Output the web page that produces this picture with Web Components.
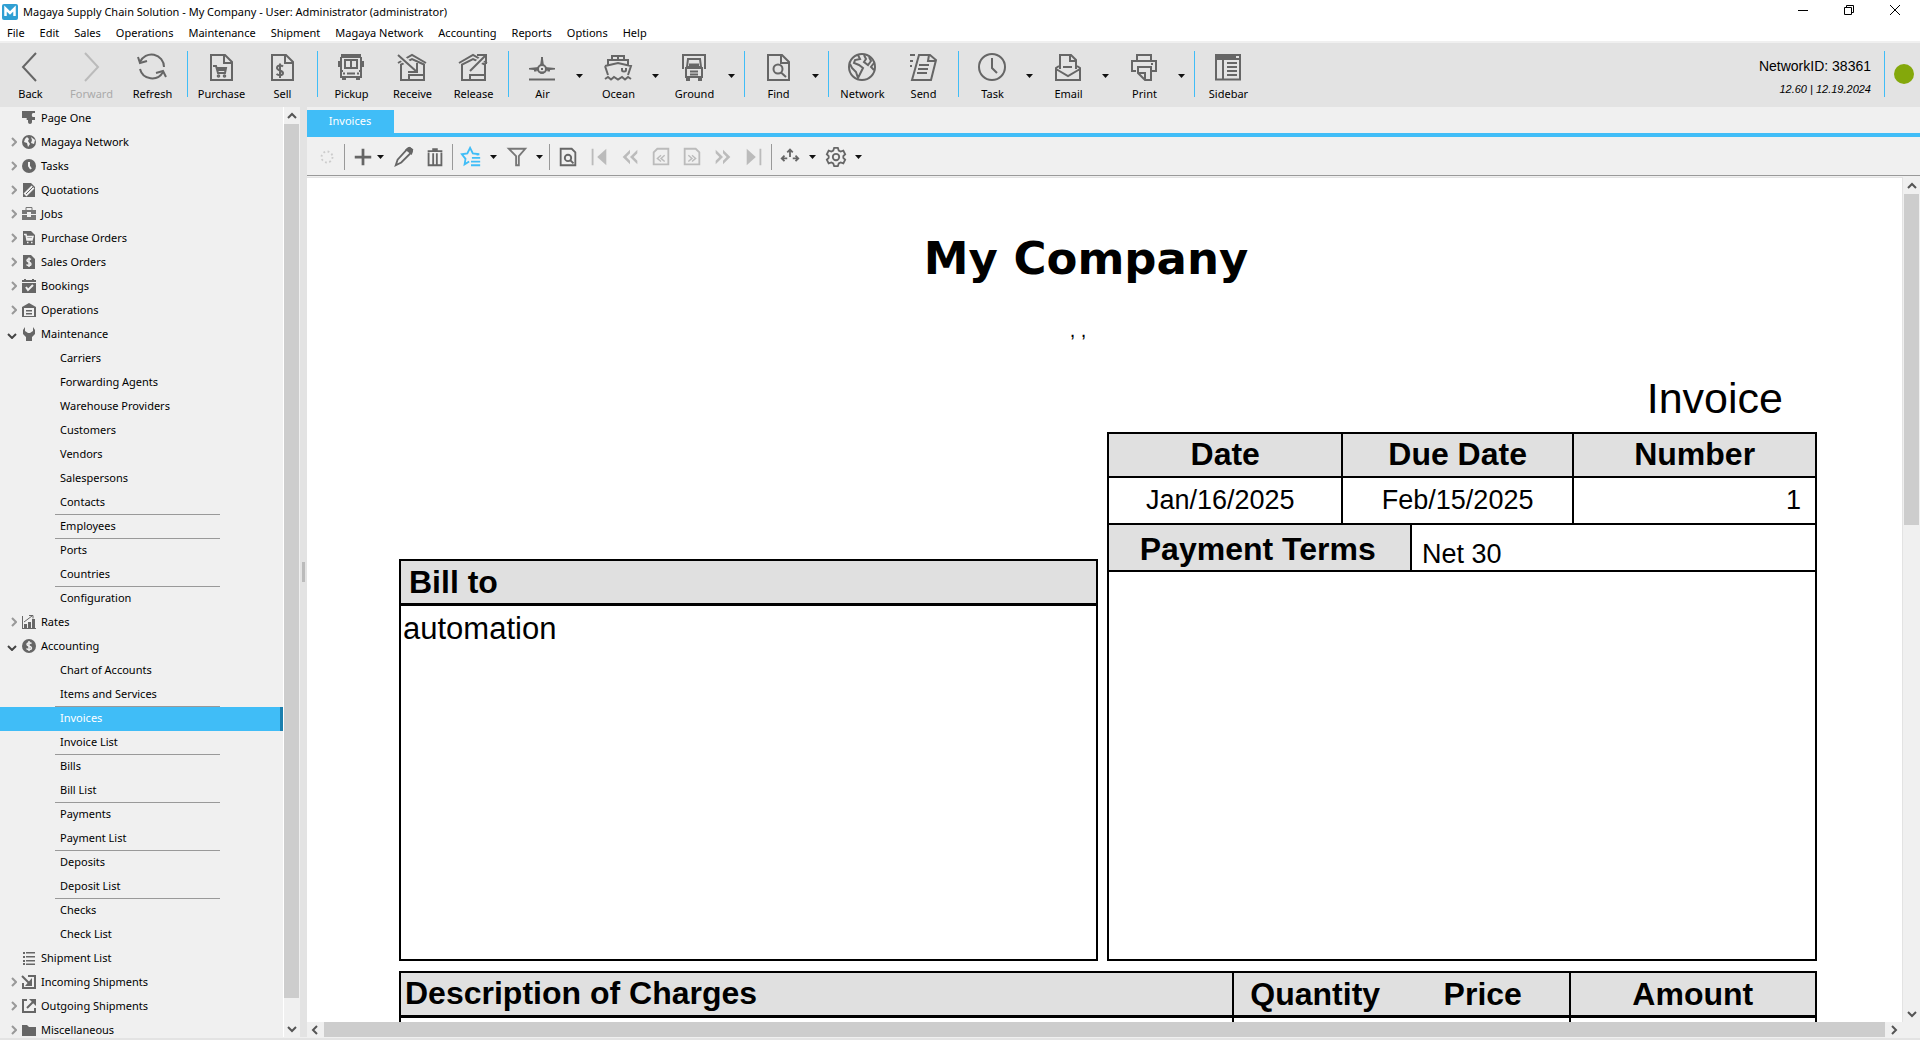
<!DOCTYPE html>
<html lang="en">
<head>
<meta charset="utf-8">
<title>Magaya Supply Chain Solution</title>
<style>
  html, body { margin: 0; height: 100%; }
  body {
    overflow: hidden;
    font: 11px/16px "Noto Sans", "Open Sans", sans-serif;
    color: #000;
    background: #f0f0f0;
    --blue: #40bdf7;
    --bar: #e3e3e3;
  }
</style>
</head>
<body>
<mg-app></mg-app>
<script>
const DOC = '<path d="M6 4H20L27 11V29H6Z"/><path d="M19 4V12H27"/>';
const HOUSE = '<path d="M2 12L16 4L30 12"/><path d="M5 29V13.500L16 8L28 13.500V29Z"/><path d="M13 29V24H27"/>';
/* Line icons on a 32 unit grid */
const LINE = {
  back: '<path d="M22 2L9 16L22 30"/>',
  forward: '<path d="M10 2L23 16L10 30"/>',
  refresh: '<path d="M4 11A12.500 12.500 0 0 1 28 16"/><path d="M2 6L4 12L11 10"/><path d="M4 18A12.500 12.500 0 0 0 27 21"/><path d="M20 22L27 20L30 26"/>',
  purchase: DOC + '<path d="M8 15H11L13 22H20L21 17H12M13 19H20"/><circle cx="13.500" cy="25" r=".8"/><circle cx="19.500" cy="25" r=".8"/>',
  sell: DOC + '<path d="M17 15.500C15 13.500 11 14.500 11 17S17 19.500 17 22S13 25 10.500 23M14 12.500V27"/>',
  pickup: '<path fill="#666" d="M7 4H25V6H7Z"/><path d="M6 6V26H26V6M10 9H22V17H10ZM16 8V17M5 20H8M24 20H27M8 26V28H10V26M22 26V28H24V26M12 22.500H20M8 22.500H10M22 22.500H24M4 10V16M28 10V16"/>',
  receive: HOUSE + '<path stroke="#e3e3e3" stroke-width="6" d="M2 3L19 19"/><path d="M2 4L21 21M21 12V21H12"/>',
  release: HOUSE + '<path stroke="#e3e3e3" stroke-width="6" d="M15 18L30 3"/><path d="M13 20L29 4M20 4H29V13"/>',
  air: '<path d="M3 28.500H29"/><circle cx="16" cy="18" r="4"/><path d="M16 6V14M14 21.500H18"/><path fill="#666" stroke="none" d="M13 16L3 17V18.500L8 19V20.500H10.500V19.500L13 20ZM19 16L29 17V18.500L24 19V20.500H21.500V19.500L19 20ZM15 17H17V19H15ZM15 8H17L18 15H14Z"/>',
  ocean: '<path d="M10 9V5H22V9M6 14V9H26V14M3 15L16 12L29 15L26 24M3 15L6 24M20 17V19C20 21 24 21 24 19V17M16 5V8"/><path d="M3 28L6 26L9 28.500L12 26L16 28.500L20 26L23 28.500L26 26L29 28"/>',
  ground: '<path d="M5 18V4H27V18"/><path d="M10 8H22L23 16H9ZM8 17H24V26H8Z"/><path stroke-width="3" d="M11 14H21"/><path d="M12 20.500H20M12 23.500H20M9 26V29H11V26M21 26V29H23V26"/>',
  find: DOC + '<circle cx="16" cy="18" r="4.500"/><path d="M19 21.500L24 26"/>',
  network: '<circle cx="16" cy="16" r="13"/><path d="M12 4L14 8L9 9L8 12L13 14L17 17L15 21L12 27L10 21L6 17L4 13M18 4L20 8L18 11L22 14L25 10L23 6M28 12L25 16L28 19"/>',
  send: '<path d="M12 4H23L29 9L24 29H5Z"/><path d="M22 4L21 10H29M12 14H22M11 18H21M10 22H20M3 4H8M3 10H6M3 15H5"/>',
  task: '<circle cx="16" cy="16" r="13"/><path d="M16 7V17L21 22"/>',
  email: '<path d="M8 18V4H19L24 9V18"/><path d="M18 4V10H24"/><path d="M7 15L4 17V29H28V17L25 15M4 18L16 25L28 18M11 16H20"/>',
  print: '<path d="M9 10V4H23V10M8 20H4V10H28V20H23M10 16H23V29H17L10 22ZM10 22H17V29M23 13H25"/>',
  sidebar: '<path d="M4 4H28V28.500H4Z"/><path stroke-width="4" d="M4 5.500H24"/><path d="M11 8V28M15 12H25M15 16H25M15 20H25M15 24H25M4 8H28"/>'
};
/* Glyphs on a 16 unit grid for the navigation tree */
const TREE = {
  page: '<path d="M1 1H14V3H12C10.500 3 10.500 7 12 7H14V10H11V12C11 14.500 7 14.500 7 12V10C4 10 7 8 5 8H1Z"/>',
  globe: '<path fill-rule="evenodd" d="M8 1A7 7 0 1 1 8 15A7 7 0 1 1 8 1M6 3L4 5L3 8L6 9L7 13L9 10L7 7L8 5ZM10 3L11 6L10 9L13 10L14 6Z"/>',
  clock: '<circle cx="8" cy="8" r="7"/><path fill="none" stroke="#f0f0f0" stroke-width="2" d="M8 4V8L10 11"/>',
  quote: '<path d="M2 1H10L14 5V15H2Z"/><path fill="none" stroke="#f0f0f0" stroke-width="4" d="M4 13L12 5"/><path fill="none" stroke="#666" d="M5 12L12 5"/>',
  job: '<path fill="none" stroke="#777" d="M5 5V1.500H11V5"/><path fill="#777" d="M1 4H15V8H1ZM1 9H15V14H1Z"/><path fill="#f0f0f0" d="M6 6H10V11H6Z"/>',
  cart: '<path d="M2 1H10L14 5V15H2Z"/><path fill="none" stroke="#f0f0f0" stroke-width="1.500" d="M3 4.500H5L6 10H11L12 6.500H5M6 8.500H11M6 12.500H7.500M10 12.500H11.500"/>',
  sale: '<path d="M2 1H10L14 5V15H2Z"/><path fill="none" stroke="#f0f0f0" stroke-width="1.500" d="M10 5.500C8 4 6 5 6 6.500S10 8 10 10S7 12 5.500 10.500M8 3.500V13"/>',
  book: '<path d="M1 2H3V1H5V2H11V1H13V2H15V4H1ZM1 5H15V15H1Z"/><path fill="none" stroke="#f0f0f0" stroke-width="2" d="M5 9L7 12L12 7"/>',
  ware: '<path d="M1 5L8 1L15 5V15H1Z"/><path fill="#f0f0f0" d="M3 6H13V14H3Z"/><path d="M5 8H11V9.500H5ZM5 11H11V12.500H5Z"/>',
  wrench: '<path d="M4 1V5L7 7H9L12 5V1L14 4V8L11 11V15H5V11L2 8V4Z"/>',
  rates: '<path d="M1 2H2V14H15V15H1ZM3 10H6V14H3ZM7 8H10V14H7ZM11 5H14V14H11Z"/><path fill="none" stroke="#666" d="M3 8L11 2M8 1.500H12V4.500"/>',
  coin: '<circle cx="8" cy="8" r="7"/><path fill="none" stroke="#f0f0f0" stroke-width="1.500" d="M10.500 5.500C8 4 6 5 6 6.500S10.500 8 10.500 10S7 12 5.500 10.500M8 3V13"/>',
  list: '<path d="M2 2H4V4H2ZM2 6H4V8H2ZM2 10H4V12H2ZM2 13H4V15H2ZM5 2H14V3.500H5ZM5 6H14V7.500H5ZM5 10H14V11.500H5ZM5 13.500H14V15H5Z"/>',
  inc: '<path fill="none" stroke="#666" stroke-width="2" d="M7 2H14V14H2V9M1 2L9 10"/><path d="M11 4V12H4Z"/>',
  out: '<path fill="none" stroke="#666" stroke-width="2" d="M6 2H2V14H14V10M6 10L13 3"/><path d="M8 1H15V8Z"/>',
  folder: '<path d="M1 3H6L8 5H15V14H1Z"/>'
};
/* View toolbar icons on a 24 unit grid */
const VIEW = {
  busy: '<circle cx="12" cy="12" r="6" stroke="#ccc" stroke-dasharray="2 2.700"/>',
  plus: '<path stroke-width="3" d="M12 3V21M3 12H21"/>',
  pencil: '<path d="M3 21L5 15L16 3C18 1 22 4 20 7L9 18Z"/><path fill="#666" d="M15 4L20 8L21 4L18 2Z"/>',
  trash: '<path d="M5 7V21H19V7M10 8V20M14 8V20"/><path d="M4 5.500H20M9 3.500H15"/>',
  star: '<path stroke="#40bdf7" d="M18 9.500L21 9L14 8L11 2L8 8L2 9L6 14L5 20L10 17"/><path stroke="#40bdf7" d="M13 13H22M12 17H22M12 21H22"/>',
  filter: '<path stroke="#777" d="M3 3H21L14 11V21H11V11Z"/>',
  preview: '<path d="M4 3H16L20 7V21H4Z"/><circle cx="12" cy="13" r="3.500"/><path d="M14 15L18 19"/>',
  first: '<path stroke="#bbb" d="M5 3V21"/><path fill="#bbb" stroke="none" d="M20 3V21L10 12Z"/>',
  prev: '<path fill="#bbb" stroke="none" d="M12 4L4 12L12 20V16L8 12L12 8ZM20 4L12 12L20 20V16L16 12L20 8Z"/>',
  pageprev: '<path stroke="#bbb" d="M8 3H20V20H4V7Z"/><path stroke="#bbb" stroke-width="1.500" d="M12 10L8 13.500L12 17M16 10L12 13.500L16 17"/>',
  pagenext: '<path stroke="#bbb" d="M4 3H16L20 7V20H4Z"/><path stroke="#bbb" stroke-width="1.500" d="M8 10L12 13.500L8 17M12 10L16 13.500L12 17"/>',
  next: '<path fill="#bbb" stroke="none" d="M4 4L12 12L4 20V16L8 12L4 8ZM12 4L20 12L12 20V16L16 12L12 8Z"/>',
  last: '<path stroke="#bbb" d="M19 3V21"/><path fill="#bbb" stroke="none" d="M4 3V21L14 12Z"/>',
  spread: '<path d="M12 4V12M9 7L12 4L15 7M9 13.500H3M6 10.500L3 13.500L6 16.500M15 13.500H21M18 10.500L21 13.500L18 16.500"/>',
  gear: '<circle cx="12" cy="12" r="3.500"/><path d="M10 2H14L15 5L17 6L20 5L22 9L20 11V13L22 15L20 19L17 18L15 19L14 22H10L9 19L7 18L4 19L2 15L4 13V11L2 9L4 5L7 6L9 5Z"/>'
};
const CARET = '<svg class="caret" width="7" height="4" viewBox="0 0 7 4" aria-hidden="true"><path d="M0 0H7L3.500 4Z" fill="#111"/></svg>';
const RESET = `
  *, *::before, *::after { box-sizing: border-box; }
  button { font: inherit; color: inherit; background: none; border: 0; padding: 0; margin: 0; display: flex; align-items: center; justify-content: center; }
  a { color: inherit; text-decoration: none; }
  svg { display: block; flex: none; }`;

class Base extends HTMLElement {
  connectedCallback() {
    if (this.shadowRoot) return;
    this.attachShadow({ mode: 'open' }).innerHTML = `<style>${RESET}${this.css()}</style>${this.html()}`;
  }
  css() { return ''; }
  html() { return '<slot></slot>'; }
}

customElements.define('mg-title-bar', class extends Base {
  css() { return `
    :host { display: flex; height: 23px; background: #fff; align-items: center; padding: 0 2px; gap: 5px; }
    span { flex: 1; white-space: nowrap; }
    .win { display: flex; align-self: flex-start; }
    .win button { width: 46px; height: 20px; }`; }
  html() { return `
    <svg width="16" height="16" viewBox="0 0 16 16" aria-hidden="true"><rect width="16" height="16" rx="2" fill="#2f9fd3"/><path d="M3.500 12V4.500L8 9L12.500 4.500V12" fill="none" stroke="#fff" stroke-width="2.500"/></svg>
    <span><slot></slot></span>
    <div class="win">
      <button aria-label="Minimize"><svg width="10" height="10"><path d="M0 5.500H10" stroke="#000"/></svg></button>
      <button aria-label="Restore"><svg width="10" height="10" fill="none" stroke="#000"><path d="M.5 2.500H7.500V9.500H.5ZM2.500 2.500V.5H9.500V7.500H7.500"/></svg></button>
      <button aria-label="Close"><svg width="10" height="10" stroke="#000"><path d="M0 0L10 10M10 0L0 10"/></svg></button>
    </div>`; }
});

customElements.define('mg-menu-bar', class extends Base {
  css() { return `
    :host { display: block; background: #fff; height: 18px; }
    nav { display: flex; gap: 15px; padding-left: 7px; line-height: 20px; }`; }
  html() { return `<nav>${this.getAttribute('items').split(',').map(t => `<button>${t}</button>`).join('')}</nav>`; }
});

customElements.define('mg-tool', class extends Base {
  css() { return `
    :host { display: flex; color: #000; }
    :host([off]) { color: #aaa; }
    .main { width: 61px; flex-direction: column; }
    .main svg { fill: none; stroke: #666; stroke-width: 2; margin-right: 1px; }
    :host([off]) .main svg { stroke: #bbb; }
    .label { line-height: 16px; margin-top: 3px; }
    .drop { width: 15px; padding-right: 3px; }`; }
  html() { return `
    <button class="main"><svg width="32" height="32" viewBox="0 0 32 32" aria-hidden="true">${LINE[this.getAttribute('icon')]}</svg><span class="label"><slot></slot></span></button>
    ${this.hasAttribute('drop') ? `<button class="drop" aria-label="More">${CARET}</button>` : ''}`; }
});

customElements.define('mg-main-toolbar', class extends Base {
  css() { return `
    :host { display: flex; height: 66px; border-top: 2px solid #f0f0f0; background: var(--bar); padding-top: 8px; }
    i { width: 1px; height: 46px; margin: 0 3px 0 4px; background: var(--blue); }
    .group { display: flex; height: 50px; }
    .info { margin-left: auto; text-align: right; font-family: "Liberation Sans", Arial, sans-serif; padding: 6px 9px 0 0; font-size: 14px; line-height: 18px; }
    em { display: block; font-size: 11px; line-height: 16px; margin-top: 6px; }
    .dot { width: 20px; height: 20px; border-radius: 50%; background: #84a80b; margin: 13px 6px 0 6px; }`; }
  html() {
    const groups = [
      [['back', 'Back'], ['forward', 'Forward', 'off'], ['refresh', 'Refresh']],
      [['purchase', 'Purchase'], ['sell', 'Sell']],
      [['pickup', 'Pickup'], ['receive', 'Receive'], ['release', 'Release']],
      [['air', 'Air', 'drop'], ['ocean', 'Ocean', 'drop'], ['ground', 'Ground', 'drop']],
      [['find', 'Find', 'drop']],
      [['network', 'Network'], ['send', 'Send']],
      [['task', 'Task', 'drop'], ['email', 'Email', 'drop'], ['print', 'Print', 'drop']],
      [['sidebar', 'Sidebar']]];
    return groups.map(g => `<div class="group">${g.map(([i, t, f]) => `<mg-tool icon="${i}" ${f || ''}>${t}</mg-tool>`).join('')}</div>`).join('<i></i>') +
      '<div class="info">NetworkID: 38361<em>12.60 | 12.19.2024</em></div><i></i><div class="dot"></div>';
  }
});

customElements.define('mg-scroll-bar', class extends Base {
  css() { return `
    :host { display: flex; flex-direction: column; width: 15px; background: #f0f0f0; }
    :host([across]) { flex-direction: row; width: auto; height: 15px; }
    button { width: 15px; height: 17px; flex: none; }
    :host([across]) button { width: 17px; height: 15px; }
    .track { flex: 1; display: flex; flex-direction: inherit; }
    .thumb { background: #cdcdcd; flex: 0 0 var(--size, 100%); }
    svg { fill: none; stroke: #555; stroke-width: 2; }`; }
  html() {
    const [a, b] = this.hasAttribute('across')
      ? ['M6 1L2 5L6 9', 'M3 1L7 5L3 9'] : ['M1 7L5 3L9 7', 'M1 3L5 7L9 3'];
    const btn = (d, n) => `<button aria-label="${n}"><svg width="10" height="10" viewBox="0 0 10 10"><path d="${d}"/></svg></button>`;
    return `${btn(a, 'Scroll back')}<div class="track"><div class="thumb"></div></div>${btn(b, 'Scroll forward')}`;
  }
});

customElements.define('mg-tree-item', class extends Base {
  css() { return `
    :host { display: block; height: 24px; line-height: 22px; }
    a { display: flex; align-items: center; height: 24px; padding: 0 0 2px 7px; }
    .chev { width: 14px; display: flex; justify-content: center; }
    .chev svg { fill: none; stroke: #999; stroke-width: 2; }
    .chev.closed { justify-content: flex-end; padding-right: 4px; }
    .chev.open svg { stroke: #444; margin-right: 4px; margin-top: 4px; }
    .icon { fill: #666; margin-right: 4px; }
    :host([child]) { position: relative; }
    :host([child]) a { padding-left: 60px; }
    :host([rule])::after { content: ""; position: absolute; left: 55px; width: 165px; bottom: 0; height: 1px; background: #999; }
    :host([current]) a { background: var(--blue); color: #fff; border-right: 3px solid #1b7fae; }`; }
  html() {
    if (this.hasAttribute('child')) return '<a href="#"><slot></slot></a>';
    const s = this.getAttribute('state');
    const chev = s === 'closed' ? '<svg width="6" height="10"><path d="M1 1L5 5L1 9"/></svg>'
      : s === 'open' ? '<svg width="10" height="6"><path d="M1 1L5 5L9 1"/></svg>' : '';
    return `<a href="#"><span class="chev ${s || ''}">${chev}</span><svg class="icon" width="16" height="16" viewBox="0 0 16 16" aria-hidden="true">${TREE[this.getAttribute('icon')]}</svg><slot></slot></a>`;
  }
});

customElements.define('mg-tree', class extends Base {
  css() { return `
    :host { display: flex; overflow: hidden; background: #f0f0f0; }
    nav { flex: 1; overflow: hidden; border-right: 1px solid #fff; }
    mg-scroll-bar { --size: 97.5%; margin-right: 1px; }`; }
  html() {
    const rows = [
      ['Page One', 'page'], ['Magaya Network', 'globe', 'closed'], ['Tasks', 'clock', 'closed'], ['Quotations', 'quote', 'closed'],
      ['Jobs', 'job', 'closed'], ['Purchase Orders', 'cart', 'closed'], ['Sales Orders', 'sale', 'closed'], ['Bookings', 'book', 'closed'],
      ['Operations', 'ware', 'closed'], ['Maintenance', 'wrench', 'open'],
      'Carriers', 'Forwarding Agents', 'Warehouse Providers', 'Customers', 'Vendors', 'Salespersons', 'Contacts_', 'Employees_',
      'Ports', 'Countries_', 'Configuration', ['Rates', 'rates', 'closed'], ['Accounting', 'coin', 'open'],
      'Chart of Accounts', 'Items and Services_', 'Invoices*', 'Invoice List_', 'Bills', 'Bill List_', 'Payments', 'Payment List_',
      'Deposits', 'Deposit List_', 'Checks', 'Check List', ['Shipment List', 'list'], ['Incoming Shipments', 'inc', 'closed'],
      ['Outgoing Shipments', 'out', 'closed'], ['Miscellaneous', 'folder', 'closed']];
    return `<nav aria-label="Modules">${rows.map(r => Array.isArray(r)
      ? `<mg-tree-item icon="${r[1]}" ${r[2] ? `state="${r[2]}"` : ''}>${r[0]}</mg-tree-item>`
      : `<mg-tree-item child ${r.endsWith('_') ? 'rule' : ''} ${r.endsWith('*') ? 'current' : ''}>${r.replace(/[_*]/, '')}</mg-tree-item>`).join('')}</nav><mg-scroll-bar></mg-scroll-bar>`;
  }
});

customElements.define('mg-view-bar', class extends Base {
  css() { return `
    :host { display: flex; align-items: center; height: 39px; padding: 2px 0 0 4px; border-bottom: 1px solid #999; }
    button { width: 31px; height: 30px; }
    .drop { width: 12px; margin: 0 2px 0 1px; }
    .tight { margin-left: -4px; }
    svg { fill: none; stroke: #666; stroke-width: 2; }
    .caret { stroke: none; }
    i { width: 1px; height: 26px; background: #999; margin: 0 2px; }`; }
  html() {
    const b = n => `<button aria-label="${n}"><svg width="22" height="22" viewBox="0 0 24 24">${VIEW[n]}</svg></button>`;
    const d = `<button class="drop" aria-label="More">${CARET}</button>`;
    return b('busy') + '<i></i>' + b('plus') + d.replace('drop', 'drop tight') + b('pencil') + b('trash') + '<i></i>' + b('star') + d + b('filter') + d +
      '<i></i>' + ['preview', 'first', 'prev', 'pageprev', 'pagenext', 'next', 'last'].map(b).join('') + '<i></i>' + b('spread') + d + b('gear') + d;
  }
});

customElements.define('mg-invoice', class extends Base {
  css() { return `
    :host { display: block; background: #fff; overflow: hidden; font-family: "Liberation Sans", Arial, sans-serif; font-size: 27px; line-height: 32px; padding: 48px 85px 0 92px; }
    header { text-align: center; padding-right: 44px; }
    h1 { margin: 0; font: 700 45px/66px "DejaVu Sans", sans-serif; }
    header p { margin: 26px 0 0; padding-right: 16px; font-size: 20px; line-height: 24px; }
    h2 { margin: 24px 34px 0 0; text-align: right; font-size: 43px; font-weight: 400; line-height: 64px; height: 62px; }
    .cols { display: grid; grid-template-columns: 699fr 709fr; column-gap: 9px; margin-top: 4px; }
    table { border-collapse: collapse; width: 100%; table-layout: fixed; }
    th, td { border: 2px solid #000; padding: 0; }
    th { background: #e0e0e0; font-size: 32px; line-height: 40px; height: 44px; vertical-align: top; }
    td { text-align: center; height: 47px; padding-bottom: 2px; }
    td:first-child { padding-right: 10px; }
    td.num { text-align: right; padding-right: 14px; }
    .terms { display: grid; grid-template-columns: 304fr 405fr; margin: 0; border: solid #000; border-width: 0 2px 2px; height: 47px; }
    dt { background: #e0e0e0; border-right: 2px solid #000; font-weight: 700; font-size: 32px; text-align: center; line-height: 48px; height: 45px; padding-right: 4px; }
    dd { margin: 0; padding: 13px 0 0 10px; }
    .blank { border: solid #000; border-width: 0 2px 2px; height: 389px; }
    .bill { margin-top: 127px; display: flex; flex-direction: column; }
    h3 { margin: 0; background: #e0e0e0; border: 2px solid #000; border-bottom-width: 3px; font-size: 32px; line-height: 42px; padding-left: 8px; }
    .bill div { flex: 1; border: 2px solid #000; border-top: 0; font-size: 31px; line-height: 46px; padding-left: 2px; }
    .charges { margin-top: 10px; }
    .charges th { border-bottom-width: 3px; text-align: center; line-height: 42px; }
    .charges th.l { text-align: left; padding-left: 4px; line-height: 40px; }
    .charges th.q { border-right: 0; } .charges th.p { border-left: 0; }
    .charges td { height: 40px; }`; }
  html() { return `
    <header><h1>My Company</h1><p>, ,</p></header>
    <h2>Invoice</h2>
    <div class="cols">
      <section class="bill"><h3>Bill to</h3><div>automation</div></section>
      <section>
        <table><colgroup><col style="width:33%"><col style="width:32.700%"><col></colgroup>
          <thead><tr><th>Date</th><th>Due Date</th><th>Number</th></tr></thead>
          <tbody><tr><td>Jan/16/2025</td><td>Feb/15/2025</td><td class="num">1</td></tr></tbody></table>
        <dl class="terms"><dt>Payment Terms</dt><dd>Net 30</dd></dl>
        <div class="blank"></div>
      </section>
    </div>
    <table class="charges"><colgroup><col style="width:58.800%"><col style="width:11.600%"><col style="width:12.200%"><col></colgroup>
      <thead><tr><th class="l">Description of Charges</th><th class="q">Quantity</th><th class="p">Price</th><th>Amount</th></tr></thead>
      <tbody><tr><td></td><td colspan="2"></td><td></td></tr></tbody></table>`; }
});

customElements.define('mg-workspace', class extends Base {
  css() { return `
    :host { display: flex; flex-direction: column; min-width: 0; min-height: 0; }
    .tabs { display: flex; padding-top: 3px; border-bottom: 4px solid var(--blue); }
    .tabs button { width: 87px; height: 23px; background: var(--blue); color: #fff; padding: 0 1px 2px 0; }
    .view { flex: 1; min-height: 0; display: grid; grid-template-columns: minmax(0, 1fr) 17px; margin-top: 1px; }
    mg-invoice { border: 1px solid #e3e3e3; border-left: 0; border-bottom: 0; min-height: 0; }
    .view mg-scroll-bar { --size: 40.800%; margin: 0 1px; }
    .foot { margin-right: 18px; }`; }
  html() { return `
    <div class="tabs" role="tablist"><button role="tab" aria-selected="true">Invoices</button></div>
    <mg-view-bar></mg-view-bar>
    <div class="view"><mg-invoice></mg-invoice><mg-scroll-bar></mg-scroll-bar></div>
    <mg-scroll-bar class="foot" across></mg-scroll-bar>`; }
});

customElements.define('mg-app', class extends Base {
  css() { return `
    :host { display: flex; flex-direction: column; height: 100vh; background: #f0f0f0; }
    main { flex: 1; min-height: 0; display: grid; grid-template-columns: 300px 7px minmax(0, 1fr); grid-template-rows: minmax(0, 1fr); border-bottom: 2px solid var(--bar); padding-bottom: 1px; }
    .split { background: var(--bar); display: flex; align-items: center; justify-content: center; }
    .split::before { content: ""; width: 3px; height: 20px; background: #bbb; }`; }
  html() { return `
    <mg-title-bar>Magaya Supply Chain Solution - My Company - User: Administrator (administrator)</mg-title-bar>
    <mg-menu-bar items="File,Edit,Sales,Operations,Maintenance,Shipment,Magaya Network,Accounting,Reports,Options,Help"></mg-menu-bar>
    <mg-main-toolbar></mg-main-toolbar>
    <main><mg-tree></mg-tree><div class="split"></div><mg-workspace></mg-workspace></main>`; }
});
</script>
</body>
</html>
